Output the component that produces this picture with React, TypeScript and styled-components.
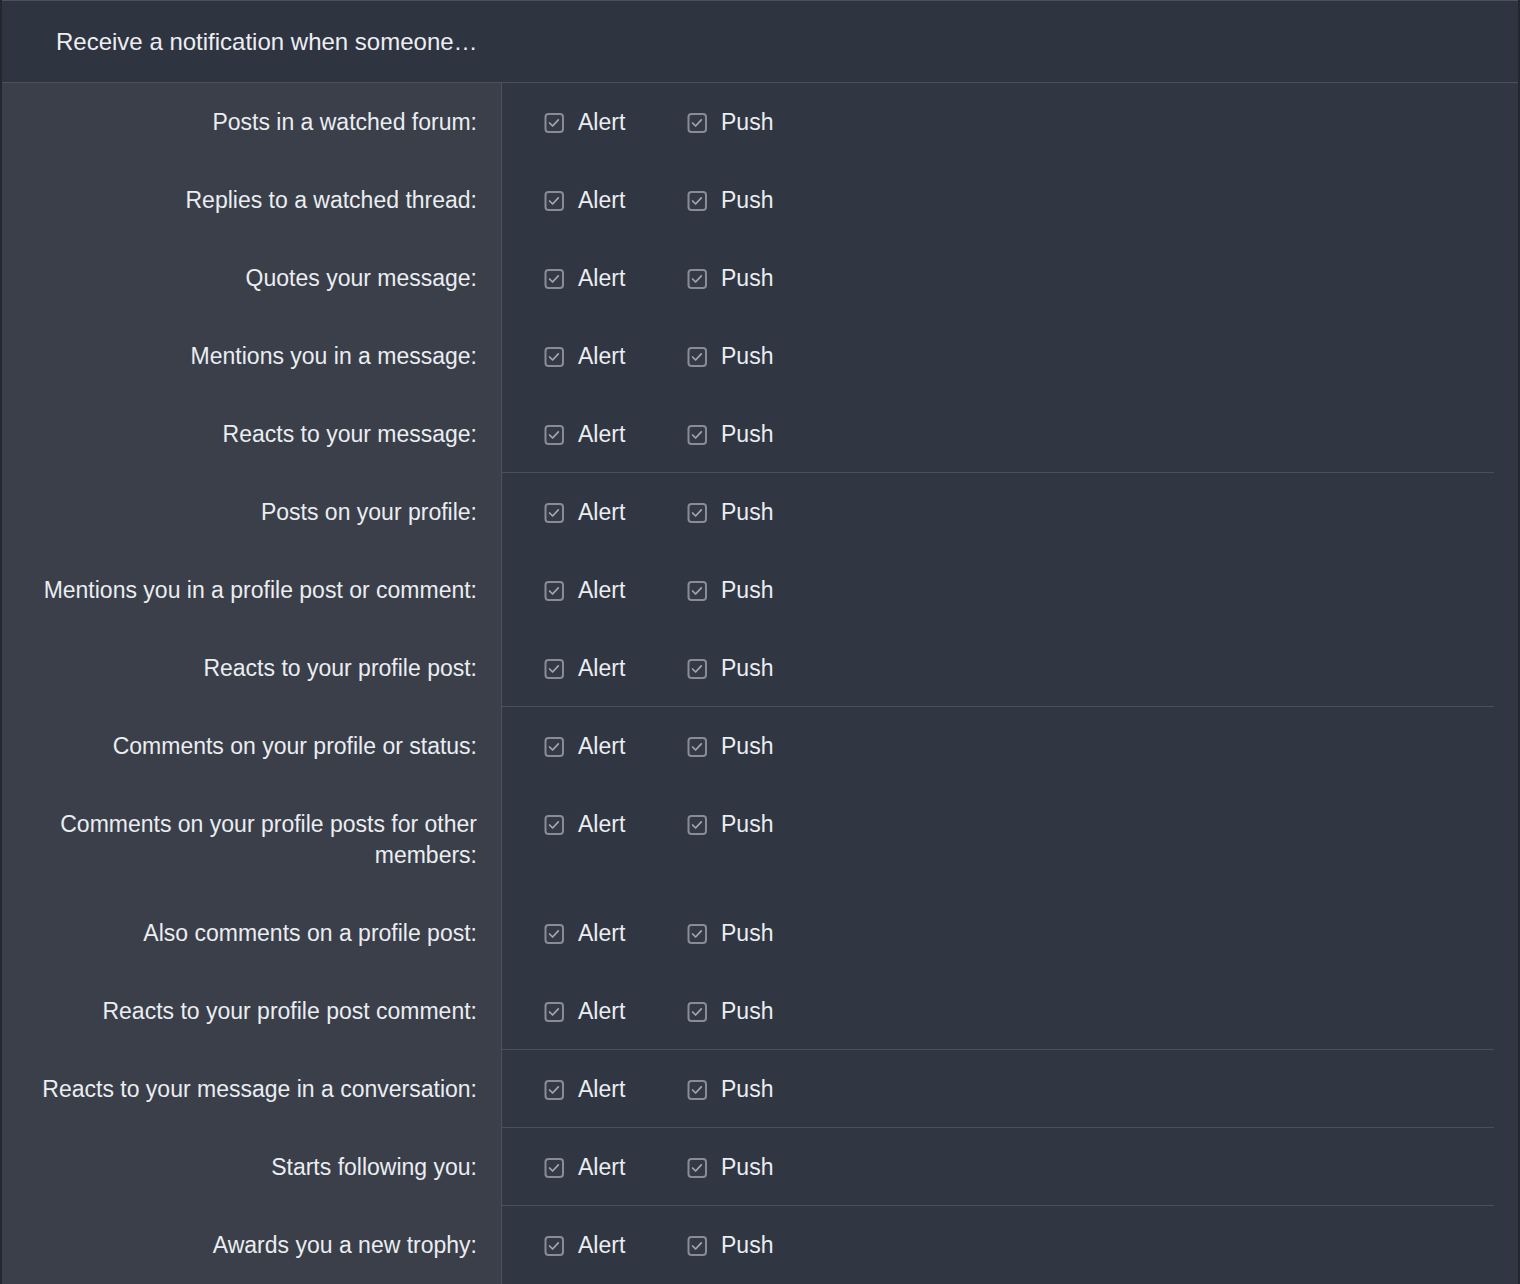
import React from "react";
import styled, { createGlobalStyle } from "styled-components";

const GlobalStyle = createGlobalStyle`
  html, body {
    margin: 0;
    padding: 0;
    background: #23272e;
  }
  body {
    font-family: "Liberation Sans", Arial, sans-serif;
    -webkit-font-smoothing: antialiased;
  }
`;

const Block = styled.div`
  margin: 0 2px 0 2px;
  border-top: 1px solid #4b515c;
  background: #313643;
  min-height: 1283px;
  color: #eaedf1;
  font-size: 23px;
  line-height: 31px;
`;

const Header = styled.h3`
  margin: 0;
  height: 82px;
  box-sizing: border-box;
  display: flex;
  align-items: center;
  padding: 0 0 0 54px;
  background: #2f3441;
  border-bottom: 1px solid #4b515c;
  font-size: 24px;
  font-weight: 400;
  color: #eceef2;
`;

const Body = styled.div`
  display: flex;
  flex-direction: column;
`;

const Row = styled.div`
  display: grid;
  grid-template-columns: 500px 1fr;
`;

const SepRow = styled(Row)`
  margin-top: -1px;
`;

const Label = styled.div`
  background: #3a3f4a;
  border-right: 1px solid #4b515c;
  text-align: right;
  padding: 24px 24px 23px 30px;
`;

const Controls = styled.div`
  display: flex;
  align-items: flex-start;
  padding: 24px 24px 23px 42px;
`;

const SepLeft = styled.div`
  background: #3a3f4a;
  border-right: 1px solid #4b515c;
  height: 1px;
`;

const SepLine = styled.div`
  height: 1px;
  background: #4b515c;
  margin-right: 24px;
`;

const Choice = styled.label`
  display: flex;
  align-items: center;
  gap: 14px;
  min-width: 143px;
  height: 31px;
`;

const Box = styled.svg`
  width: 20px;
  height: 20px;
  flex: none;
  margin-top: 1px;
`;

const Checkbox = () => (
  <Box viewBox="0 0 20 20">
    <rect x="1.5" y="1" width="17.5" height="18" rx="3" fill="#343946" stroke="#878c97" strokeWidth="2" />
    <polyline points="5.6,10 8.6,13 14.3,6.9" fill="none" stroke="#a2a7b0" strokeWidth="1.7" strokeLinecap="round" strokeLinejoin="round" />
  </Box>
);

const groups: string[][] = [
  [
    "Posts in a watched forum:",
    "Replies to a watched thread:",
    "Quotes your message:",
    "Mentions you in a message:",
    "Reacts to your message:",
  ],
  [
    "Posts on your profile:",
    "Mentions you in a profile post or comment:",
    "Reacts to your profile post:",
  ],
  [
    "Comments on your profile or status:",
    "Comments on your profile posts for other members:",
    "Also comments on a profile post:",
    "Reacts to your profile post comment:",
  ],
  ["Reacts to your message in a conversation:"],
  ["Starts following you:"],
  ["Awards you a new trophy:"],
];

export default function App() {
  return (
    <>
      <GlobalStyle />
      <Block>
        <Header>Receive a notification when someone…</Header>
        <Body>
          {groups.map((g, gi) => (
            <React.Fragment key={gi}>
              {gi > 0 && (
                <SepRow>
                  <SepLeft />
                  <SepLine />
                </SepRow>
              )}
              {g.map((label) => (
                <Row key={label}>
                  <Label>{label}</Label>
                  <Controls>
                    <Choice>
                      <Checkbox />
                      Alert
                    </Choice>
                    <Choice>
                      <Checkbox />
                      Push
                    </Choice>
                  </Controls>
                </Row>
              ))}
            </React.Fragment>
          ))}
        </Body>
      </Block>
    </>
  );
}
